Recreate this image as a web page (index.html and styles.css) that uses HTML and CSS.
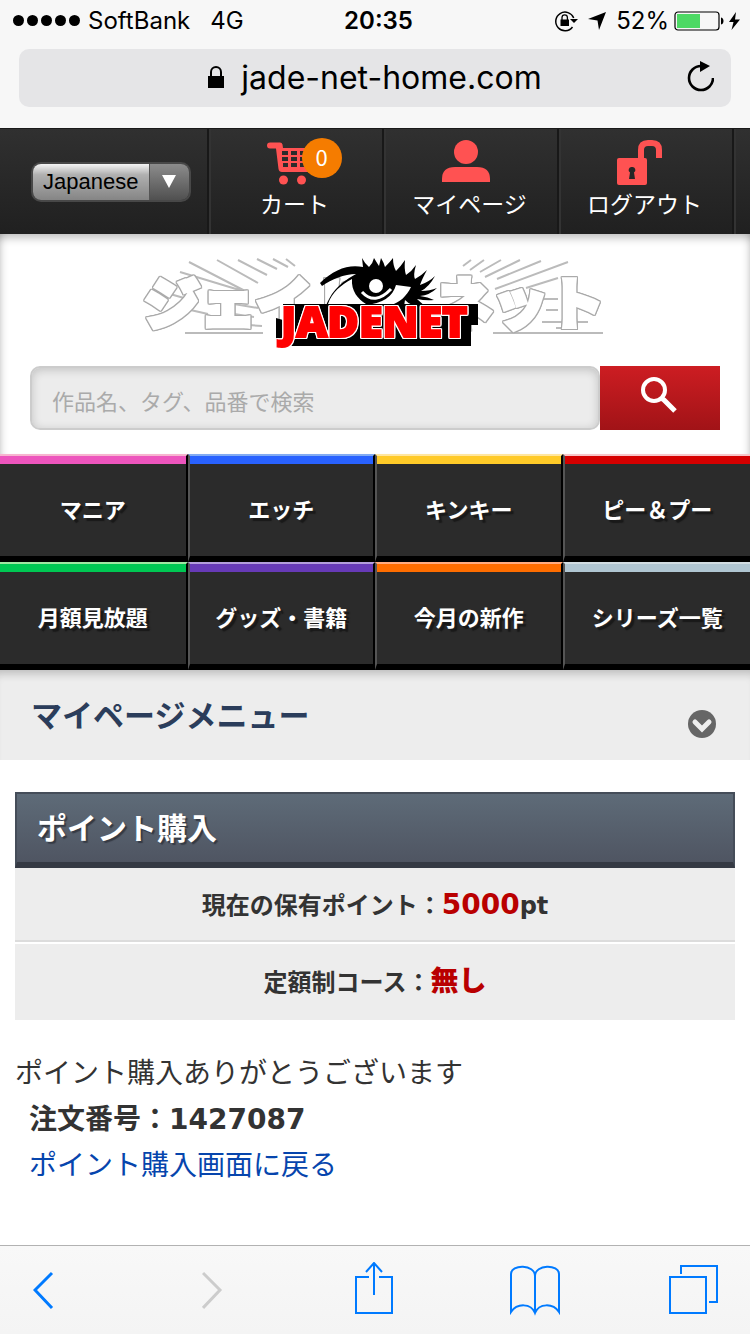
FILE: index.html
```html
<!DOCTYPE html>
<html lang="ja">
<head>
  <meta charset="UTF-8">
  <meta name="viewport" content="width=device-width, initial-scale=1.0">
  <title>ポイント購入 | JADENET</title>
  <link rel="stylesheet" href="styles.css">
</head>
<body>
  <div class="browser-top">
    <div class="status">
      <div class="carrier">
        <span class="signal"><i></i><i></i><i></i><i></i><i></i></span>
        <span>SoftBank</span>
        <span class="network">4G</span>
      </div>
      <div class="clock">20:35</div>
      <div class="power">
        <svg class="rotation" width="24" height="22" viewBox="0 0 24 22">
          <path d="M18.500 17 A9.300 9.300 0 1 1 19.700 8" fill="none" stroke="#000" stroke-width="1.500"/>
          <path d="M16 9h8l-4 4z"/>
          <path d="M6.500 9.500h8.500v6.500H6.500z"/>
          <path d="M8 10V7.500a2.700 2.700 0 0 1 5.400 0V10" fill="none" stroke="#000" stroke-width="1.300"/>
        </svg>
        <svg class="location" width="18" height="18" viewBox="0 0 18 18"><path d="M18 0 11 18 9.500 8.500 0 7z"/></svg>
        <span>52%</span>
        <svg width="70" height="20" viewBox="0 0 70 20">
          <rect x="1" y="1" width="44" height="18" rx="3" fill="none" stroke="#000" stroke-width="1.200"/>
          <path d="M3 3h23v14H3z" fill="#4cd964"/>
          <path d="M47 6.500c2 .5 2.500 2 2.500 3.500s-.5 3-2.500 3.500z"/>
          <path d="M62 1 55 11h4.500L57.500 19 66 8.500h-5z"/>
        </svg>
      </div>
    </div>
    <div class="address">
      <button class="url" type="button">
        <svg width="16" height="23" viewBox="0 0 16 23"><path d="M0 10h16v12H0z"/><path d="M3 11V6a5 5 0 0 1 10 0v5" fill="none" stroke="#000" stroke-width="2"/></svg>
        <span>jade-net-home.com</span>
      </button>
      <button class="reload" type="button" aria-label="再読み込み">
        <svg width="28" height="32" viewBox="0 0 28 32"><path d="M15 5a12 12 0 1 0 12 12" fill="none" stroke="#000" stroke-width="2.600"/><path d="M14 0v11l10-6z"/></svg>
      </button>
    </div>
  </div>

  <header class="navbar">
    <div class="nav-cell">
      <label class="language" aria-label="Language">
        <select>
          <option>Japanese</option>
          <option>English</option>
        </select>
        <svg class="arrow" width="14" height="13" viewBox="0 0 14 13"><path d="M0 0h14L7 13z" fill="#fff"/></svg>
      </label>
    </div>
    <a class="nav-cell" href="#">
      <span class="nav-icon">
        <svg width="56" height="48" viewBox="0 0 56 48" fill="#ff5252">
          <path d="M3 3.500h10q2 0 2.500 2L16 9h40l-3 17q-1 4-4 4l.500 3H15q-3 0-3.500-3L9 9.500H3a3 3 0 0 1 0-6z"/>
          <path d="M15 12h6v4h-6zm9 0h6v4h-6zm9 0h6v4h-6zM15 18h6v4h-6zm9 0h6v4h-6zm9 0h6v4h-6zM16 24h5v4h-5zm8 0h6v4h-6zm9 0h6v4h-6z" fill="#2b2b2b"/>
          <circle cx="16.500" cy="41" r="4.500"/><circle cx="34.500" cy="41" r="4.500"/>
        </svg>
        <span class="badge">0</span>
      </span>
      <span>カート</span>
    </a>
    <a class="nav-cell" href="#">
      <span class="nav-icon">
        <svg width="56" height="48" viewBox="0 0 56 48" fill="#ff5252">
          <circle cx="24" cy="13" r="12"/>
          <path d="M0 43v-3q0-12 13-12h22q13 0 13 12v3z"/>
        </svg>
      </span>
      <span>マイページ</span>
    </a>
    <a class="nav-cell" href="#">
      <span class="nav-icon">
        <svg width="56" height="48" viewBox="0 0 56 48" fill="#ff5252">
          <rect x="0" y="19" width="30" height="27" rx="2"/>
          <path d="M24 20V11q0-7 7-7h4q7 0 7 7v8" fill="none" stroke="#ff5252" stroke-width="6"/>
          <path d="M15 28a3 3 0 0 1 2 5.500L18 40h-6l1-6.500A3 3 0 0 1 15 28z" fill="#262626"/>
        </svg>
      </span>
      <span>ログアウト</span>
    </a>
    <div class="nav-cell"></div>
  </header>

  <section class="masthead">
    <a class="logo" href="#" aria-label="JADENET">
      <svg width="462" height="88" viewBox="0 0 462 88">
        <g class="logo-rays">
          <path d="M43 4 101 34M71 2l41 23M92 2l29 15M111 1l20 10M127 1l15 8M140 1l9 7M34 14l66 20M24 36l14 4M40 51l22 5M39 75h78M88 46l24 4M88 56l20 3M88 66l28 2"/>
          <path d="m325 2-8 6M338 2l-14 10M355 2l-21 12M374 2l-35 17M395 3l-44 18M422 4l-73 27M380 30l32-10M384 41h28M400 52h12M396 64h46M347 75h110M410 70h20"/>
        </g>
        <g class="logo-kana">
          <text x="-2" y="66">ジェイド</text>
          <text x="290" y="66">ネット</text>
        </g>
        <!-- eye -->
        <path d="M174 25C188 11 203 6 217 9L216 0q3 6 7 9 4-4 5-9 3 5 5 8 1-4 2-8 3 5 4 9 5-5 8-9 0 8 3 13 5-5 9-11-1 9 1 15 6-4 10-10-3 10-1 14 6-3 12-9-5 9-7 15 9-3 15-9-6 11-14 15 9 0 16-3-7 7-17 8 8 1 14 4-8 1-17-1l10 9q-16-1-22-8l-2 13H177l2-4C185 32 196 24 210 16 198 16 186 21 176 28z"/>
        <path d="M182 46c4-12 13-19 24-25-1 12 6 20 14 25z" fill="#fff"/>
        <path d="M250 27l15 2c-4 9-12 16-20 18h-26q26-2 31-20z" fill="#fff"/>
        <circle cx="230" cy="28" r="7" fill="#fff"/>
        <path d="M216 34q13 14 29-3" fill="none" stroke="#fff" stroke-width="3"/>
        <path d="M130 60l7 2V46h195v21h-7v21H138l-8-6z"/>
        <text class="logo-word" x="135" y="79">JADENET</text>
      </svg>
    </a>
    <form class="search">
      <input type="text" placeholder="作品名、タグ、品番で検索" aria-label="作品名、タグ、品番で検索">
      <button type="button" aria-label="検索">
        <svg width="36" height="36" viewBox="0 0 36 36" fill="none" stroke="#fff"><circle cx="13" cy="13" r="11" stroke-width="4"/><path d="m20 21 3 2L34 34" stroke-width="5"/></svg>
      </button>
    </form>
  </section>

  <nav class="categories">
    <a class="pink" href="#">マニア</a>
    <a class="blue" href="#">エッチ</a>
    <a class="yellow" href="#">キンキー</a>
    <a class="red" href="#">ピー＆プー</a>
    <a class="green" href="#">月額見放題</a>
    <a class="purple" href="#">グッズ・書籍</a>
    <a class="orange" href="#">今月の新作</a>
    <a class="grey" href="#">シリーズ一覧</a>
  </nav>

  <button class="mypage-menu" type="button">
    <span>マイページメニュー</span>
    <svg width="28" height="28" viewBox="0 0 28 28"><circle cx="14" cy="14" r="14" fill="#666"/><path d="m7 12 7 7 7-7" fill="none" stroke="#eee" stroke-width="5" stroke-linecap="round"/></svg>
  </button>

  <main>
    <h1>ポイント購入</h1>
    <p class="status-row">現在の保有ポイント：<strong>5000</strong>pt</p>
    <p class="status-row">定額制コース：<strong>無し</strong></p>
    <div class="result">
      <p>ポイント購入ありがとうございます</p>
      <p class="order">注文番号：1427087</p>
      <p class="back"><a href="#">ポイント購入画面に戻る</a></p>
    </div>
  </main>

  <footer class="toolbar">
    <button type="button" aria-label="戻る"><svg width="60" height="54" viewBox="0 0 60 54"><path d="M19 11 2 28l17 18" stroke-width="3"/></svg></button>
    <button type="button" aria-label="進む" disabled><svg width="44" height="54" viewBox="0 0 44 54"><path d="m1 11 17 17L1 46" stroke-width="3"/></svg></button>
    <button type="button" aria-label="共有"><svg width="46" height="54" viewBox="0 0 46 54"><path d="M14 15H1v36h36V15H24M19 33V1M11 10l8-9 8 9"/></svg></button>
    <button type="button" aria-label="ブックマーク"><svg width="50" height="54" viewBox="0 0 50 54"><path d="M25 14v37M25 14C25 2 1 2 1 12v38c6-9 20-9 24 1 4-10 18-10 24-1V12C49 2 25 2 25 14"/></svg></button>
    <button type="button" aria-label="タブ"><svg width="49" height="54" viewBox="0 0 49 54"><path d="M1 15h36v36H1zM12 12V4h36v36h-8"/></svg></button>
  </footer>
</body>
</html>
```
FILE: styles.css
```css
:root {
  --ui: Inter, "Noto Sans CJK JP", sans-serif;
  --jp: "Noto Sans CJK JP", sans-serif;
  --chrome: #f7f7f7;
  --dark: #2b2b2b;
  --panel: #ededed;
  --ios-blue: #007aff;
}
* { margin: 0; padding: 0; box-sizing: border-box; }
body {
  font-family: var(--jp);
  background: #fff;
  color: #333;
  display: flex;
  flex-direction: column;
  min-height: 100vh;
}
a { color: inherit; text-decoration: none; }
button { border: none; background: none; font: inherit; color: inherit; cursor: pointer; }
svg { display: block; }

/* browser chrome */
.browser-top {
  background: var(--chrome);
  color: #000;
  font-family: var(--ui);
  padding-bottom: 21px;
}
.status {
  display: grid;
  grid-template-columns: 1fr auto 1fr;
  align-items: center;
  height: 41px;
  padding: 0 6px 0 13px;
  font-size: 24px;
}
.carrier, .power, .signal { display: flex; align-items: center; }
.carrier { gap: 8px; }
.network { margin-left: 12px; }
.signal { gap: 3px; }
.signal i {
  width: 11px;
  height: 11px;
  border-radius: 50%;
  background: #000;
}
.clock { font-weight: 600; }
.power { justify-content: flex-end; gap: 5px; }
.location { margin: 0 5px; }
.address {
  display: grid;
  grid-template-columns: 1fr auto 1fr;
  align-items: center;
  height: 58px;
  margin: 8px 19px 0;
  padding: 0 17px 2px;
  border-radius: 10px;
  background: #e5e5e7;
}
.url {
  grid-column: 2;
  display: flex;
  align-items: center;
  gap: 17px;
  font-size: 32px;
}
.reload { justify-self: end; }

/* site header */
.navbar {
  display: grid;
  grid-template-columns: 209fr 175fr 175fr 175fr 16fr;
  height: 106px;
  background: linear-gradient(#303030, #202020);
  border-top: 1px solid #1a1a1a;
}
.nav-cell {
  display: flex;
  flex-direction: column;
  align-items: center;
  padding: 10px 4px 0 0;
  border-right: 2px solid #181818;
  border-left: 2px solid #333;
  color: #fff;
  font-size: 23px;
  line-height: 32px;
  min-width: 0;
}
.nav-cell:first-child { border-left: none; justify-content: center; padding: 0 0 0 15px; }
.nav-cell:last-child { border-right: none; }
.nav-icon { position: relative; }
.badge {
  position: absolute;
  top: -1px;
  left: 35px;
  width: 40px;
  height: 40px;
  border-radius: 50%;
  background: #f57c00;
  font-size: 22px;
  line-height: 37px;
  text-align: center;
}
.language {
  position: relative;
  border: 2px solid #484848;
  border-radius: 10px;
}
.language select {
  appearance: none;
  display: block;
  width: 156px;
  height: 36px;
  padding-left: 10px;
  border: none;
  border-radius: 8px;
  background:
    linear-gradient(90deg, transparent 116px, #555 116px, #555 117px, transparent 117px),
    linear-gradient(#8c8c8c, #505050) 117px 0 / 100% 100% no-repeat,
    linear-gradient(#f4f4f4, #b0b0b0 30%, #858585);
  color: #000;
  font: 22px "Liberation Sans", sans-serif;
}
.language .arrow {
  position: absolute;
  top: 11px;
  right: 13px;
  pointer-events: none;
}

.masthead {
  padding: 24px 30px;
  box-shadow:
    inset 0 10px 8px -6px rgba(0,0,0,0.25),
    inset 8px 0 8px -8px rgba(0,0,0,0.25),
    inset -8px 0 8px -8px rgba(0,0,0,0.25);
}
.logo {
  display: flex;
  justify-content: center;
  margin: 0 0 20px 4px;
}
.logo svg { overflow: visible; }
.logo-rays { fill: none; stroke: #bbb; stroke-width: 2; }
.logo-kana {
  font: 900 56px "Noto Sans CJK JP", sans-serif;
  fill: #fff;
  stroke: #fff;
  stroke-width: 4px;
  stroke-linejoin: miter;
  filter: drop-shadow(1px 0 0 #aaa) drop-shadow(-1px 0 0 #aaa) drop-shadow(0 1px 0 #aaa) drop-shadow(0 -1px 0 #aaa);
}
.logo-word {
  font: 800 43px "Open Sans", sans-serif;
  fill: red;
  stroke: red;
  stroke-width: 2px;
  filter: drop-shadow(1px 0 0 #fff) drop-shadow(-1px 0 0 #fff) drop-shadow(0 1px 0 #fff) drop-shadow(0 -1px 0 #fff);
}

.search { display: flex; height: 64px; }
.search input {
  flex: 1;
  min-width: 0;
  padding: 4px 20px 0;
  border: 2px solid #ccc;
  border-radius: 10px;
  background: #ececec;
  box-shadow: inset 0 2px 10px rgba(0,0,0,0.18);
  font: 22px var(--jp);
}
.search input::placeholder { color: #aaa; }
.search button {
  width: 120px;
  padding: 0 0 6px 41px;
  background: linear-gradient(#cd1d22, #a11317);
}

.categories {
  display: grid;
  grid-template-columns: repeat(4, 1fr);
  background: #000;
}
.categories a {
  height: 108px;
  padding-top: 8px;
  border: solid #000;
  border-width: 2px 2px 6px;
  border-left-color: #555;
  border-top-color: var(--light);
  background: linear-gradient(var(--bar) 8px, var(--dark) 8px);
  color: #fff;
  font-size: 22px;
  font-weight: 700;
  line-height: 88px;
  text-align: center;
  text-shadow: 3px 3px 1px #191919;
  white-space: nowrap;
}
.categories a:nth-child(4n+1) { border-left: none; }
.categories a:nth-child(4n) { border-right: none; }
.pink { --bar: #ed55bd; --light: #f7b5cf; }
.blue { --bar: #2962ff; --light: #82abf2; }
.yellow { --bar: #ffca28; --light: #ffe6a0; }
.red { --bar: #d50000; --light: #f7c5c9; }
.green { --bar: #00c853; --light: #a0e6a2; }
.purple { --bar: #673ab7; --light: #b39ddb; }
.orange { --bar: #ff6d00; --light: #ffab80; }
.grey { --bar: #b0c6d2; --light: #d2dde2; }

.mypage-menu {
  display: flex;
  align-items: center;
  justify-content: space-between;
  height: 90px;
  padding: 0 34px 4px 31px;
  background: var(--panel);
  box-shadow: inset 0 10px 8px -6px rgba(0,0,0,0.2);
  color: #2b3d5b;
  font-size: 31px;
  font-weight: 700;
}
.mypage-menu svg { margin-top: 22px; }

/* content */
main { padding: 32px 15px; }
h1 {
  height: 76px;
  padding-left: 20px;
  border: 2px solid #454d59;
  border-bottom: 6px solid #353a44;
  background: linear-gradient(#5e6b78, #4f5562);
  color: #fff;
  font-size: 30px;
  line-height: 64px;
  text-shadow: 2px 2px 1px #353a44;
}
.status-row {
  height: 74px;
  background: var(--panel);
  font-family: "DejaVu Sans", var(--jp);
  font-size: 24px;
  font-weight: 700;
  line-height: 74px;
  text-align: center;
}
.status-row + .status-row {
  height: 76px;
  margin-top: 2px;
  line-height: 76px;
}
.status-row:not(:last-of-type) { border-bottom: 2px solid #dcdcdc; }
.status-row strong { color: #b90000; font-size: 28px; }
.result {
  padding-top: 31px;
  font-family: "DejaVu Sans", var(--jp);
  font-size: 28px;
  line-height: 46px;
}
.order, .back { padding-left: 14px; }
.order { font-weight: 700; }
.back a { color: #0645ad; }

.toolbar {
  display: flex;
  justify-content: space-between;
  margin-top: auto;
  height: 89px;
  padding: 16px 32px 0 33px;
  border-top: 1px solid #b2b2b2;
  background: linear-gradient(#f8f8f8, #f4f4f4);
}
.toolbar button { align-self: flex-start; }
.toolbar svg { fill: none; stroke: var(--ios-blue); stroke-width: 2; }
.toolbar button:disabled svg { stroke: #ccc; }
```
